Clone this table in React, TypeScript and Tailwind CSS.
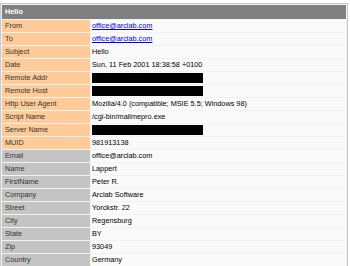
import React from 'react';

type Row = { label: string; value?: string; link?: boolean; hidden?: boolean };

const requestRows: Row[] = [
  { label: 'From', value: 'office@arclab.com', link: true },
  { label: 'To', value: 'office@arclab.com', link: true },
  { label: 'Subject', value: 'Hello' },
  { label: 'Date', value: 'Sun, 11 Feb 2001 18:38:58 +0100' },
  { label: 'Remote Addr', hidden: true },
  { label: 'Remote Host', hidden: true },
  { label: 'Http User Agent', value: 'Mozilla/4.0 (compatible; MSIE 5.5; Windows 98)' },
  { label: 'Script Name', value: '/cgi-bin/mailmepro.exe' },
  { label: 'Server Name', hidden: true },
  { label: 'MUID', value: '981913138' },
];

const formRows: Row[] = [
  { label: 'Email', value: 'office@arclab.com' },
  { label: 'Name', value: 'Lappert' },
  { label: 'FirstName', value: 'Peter R.' },
  { label: 'Company', value: 'Arclab Software' },
  { label: 'Street', value: 'Yorckstr. 22' },
  { label: 'City', value: 'Regensburg' },
  { label: 'State', value: 'BY' },
  { label: 'Zip', value: '93049' },
  { label: 'Country', value: 'Germany' },
];

function ValueCell({ row }: { row: Row }) {
  return (
    <td className="h-[12px] p-0 pl-px bg-[#fafafa] text-black whitespace-nowrap">
      {row.hidden ? (
        <div className="w-[111px] h-[10px] bg-black" />
      ) : row.link ? (
        <a href="#" className="text-[#0000ee] underline">
          {row.value}
        </a>
      ) : (
        row.value
      )}
    </td>
  );
}

export default function App() {
  return (
    <div className="w-[350px] h-[266px] bg-white pt-[3px] overflow-hidden">
      <div className="w-[348px] border border-[#c8c8c8] bg-[#f2f2f2]">
        <table
          className="w-full border-separate border-spacing-[1px] text-[7.3px] leading-[12px]"
          style={{ fontFamily: '"Liberation Sans", Arial, sans-serif' }}
        >
          <tbody>
            <tr>
              <td colSpan={2} className="h-[14px] p-0 pl-[3px] bg-[#808080] text-white font-bold">
                Hello
              </td>
            </tr>
            {requestRows.map((row) => (
              <tr key={row.label}>
                <td className="w-[88px] h-[12px] p-0 pl-[3px] bg-[#ffcc99] text-[#333333] whitespace-nowrap">
                  {row.label}
                </td>
                <ValueCell row={row} />
              </tr>
            ))}
            {formRows.map((row) => (
              <tr key={row.label}>
                <td className="w-[88px] h-[12px] p-0 pl-[3px] bg-[#c4c4c4] text-[#333333] whitespace-nowrap">
                  {row.label}
                </td>
                <ValueCell row={row} />
              </tr>
            ))}
          </tbody>
        </table>
      </div>
    </div>
  );
}
